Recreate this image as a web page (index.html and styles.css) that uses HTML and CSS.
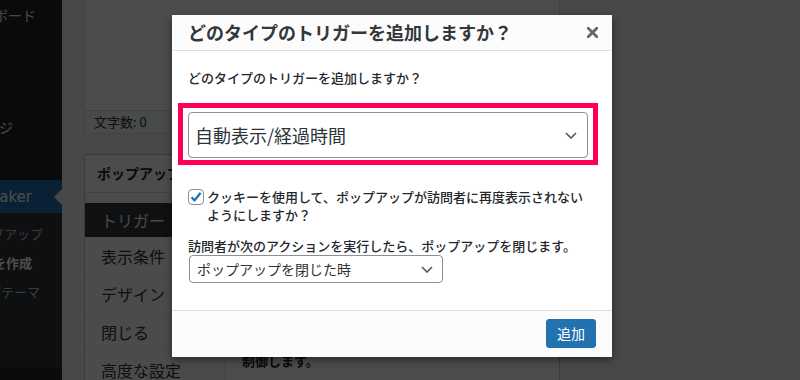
FILE: index.html
```html
<!DOCTYPE html>
<html lang="ja">
<head>
<meta charset="utf-8">
<title>トリガーを追加</title>
<link rel="stylesheet" href="styles.css">
</head>
<body>
<div class="admin">
  <nav class="sidebar">
    <div class="menu-item dash"><span>ダッシュボード</span></div>
    <div class="menu-spacer s80"></div>
    <div class="menu-item page"><span>固定ページ</span></div>
    <div class="menu-spacer s36"></div>
    <div class="menu-item current"><span>Popup Maker</span></div>
    <div class="submenu">
      <div class="sub-item all"><span>すべてのポップアップ</span></div>
      <div class="sub-item new"><span>ポップアップを作成</span></div>
      <div class="sub-item theme"><span>ポップアップテーマ</span></div>
    </div>
  </nav>
  <main class="content">
    <div class="editor">
      <div class="editor-area"></div>
      <div class="editor-status">文字数: 0</div>
    </div>
    <section class="postbox">
      <h2 class="postbox-title">ポップアップ設定</h2>
      <div class="postbox-body">
        <ul class="tabs">
          <li class="tab active">トリガー</li>
          <li class="tab">表示条件</li>
          <li class="tab">デザイン</li>
          <li class="tab">閉じる</li>
          <li class="tab">高度な設定</li>
        </ul>
        <div class="panel">
          <p class="panel-text">ポップアップの表示を<br>制御します。</p>
        </div>
      </div>
    </section>
  </main>
</div>

<div class="overlay"></div>

<div class="modal" role="dialog">
  <header class="modal-header">
    <h1 class="modal-title">どのタイプのトリガーを追加しますか？</h1>
    <span class="modal-close" aria-label="閉じる">
      <svg width="11" height="11" viewBox="0 0 11 11"><path d="M1.2 1.2 L9.8 9.8 M9.8 1.2 L1.2 9.8" stroke="#666" stroke-width="2.8" stroke-linecap="square"/></svg>
    </span>
  </header>
  <div class="modal-body">
    <div class="field-label first">どのタイプのトリガーを追加しますか？</div>
    <div class="highlight">
      <div class="select big">
        <span>自動表示/経過時間</span>
        <svg class="chev" width="12" height="7" viewBox="0 0 12 7"><path d="M1 1 L6 6 L11 1" fill="none" stroke="#50575e" stroke-width="1.6"/></svg>
      </div>
    </div>
    <div class="check-row">
      <span class="checkbox">
        <svg width="14" height="14" viewBox="0 0 14 14"><path d="M2.6 7.2 L5.6 10.4 L11.6 2.8" fill="none" stroke="#2271b1" stroke-width="2.3" stroke-linejoin="round"/></svg>
      </span>
      <span class="check-text">クッキーを使用して、ポップアップが訪問者に再度表示されないようにしますか？</span>
    </div>
    <div class="field-label">訪問者が次のアクションを実行したら、ポップアップを閉じます。</div>
    <div class="select small">
      <span>ポップアップを閉じた時</span>
      <svg class="chev" width="12" height="7" viewBox="0 0 12 7"><path d="M1 1 L6 6 L11 1" fill="none" stroke="#50575e" stroke-width="1.6"/></svg>
    </div>
  </div>
  <footer class="modal-footer">
    <button class="button-primary">追加</button>
  </footer>
</div>
</body>
</html>
```

FILE: styles.css
```css
* { box-sizing: border-box; }

html, body {
  margin: 0;
  padding: 0;
}

body {
  width: 800px;
  height: 380px;
  overflow: hidden;
  position: relative;
  background: #f0f0f1;
  font-family: "Noto Sans CJK JP", "Noto Sans", sans-serif;
  color: #1d2327;
}

.admin {
  display: flex;
  height: 380px;
  overflow: hidden;
}

/* ---------- sidebar ---------- */
.sidebar {
  width: 62px;
  flex: 0 0 62px;
  background: #1d2327;
  display: flex;
  flex-direction: column;
  overflow: hidden;
}

.menu-item,
.sub-item {
  display: flex;
  justify-content: flex-end;
  align-items: center;
  overflow: hidden;
  white-space: nowrap;
  color: #f0f0f1;
  font-size: 14px;
}

.menu-item span,
.sub-item span { flex-shrink: 0; }

.menu-item.dash { height: 30px; padding-right: 26px; }
.menu-item.page { height: 34px; padding-right: 49px; }
.menu-spacer.s80 { height: 80px; }
.menu-spacer.s36 { height: 36px; }

.menu-item.current {
  height: 33px;
  padding-right: 30px;
  background: #2271b1;
  color: #fff;
  font-family: "DejaVu Sans", sans-serif;
  font-size: 15px;
  position: relative;
}

.menu-item.current::after {
  content: "";
  position: absolute;
  right: 0;
  top: 9px;
  border-top: 8px solid transparent;
  border-bottom: 8px solid transparent;
  border-right: 8px solid #f0f0f1;
}

.submenu {
  background: #2c3338;
  height: 155px;
  padding-top: 6px;
}

.sub-item {
  height: 29px;
  font-size: 13px;
  color: rgba(240, 246, 252, 0.75);
}
.sub-item.all { padding-right: 19px; }
.sub-item.new { padding-right: 30px; color: #fff; font-weight: 700; }
.sub-item.theme { padding-right: 22px; }

/* ---------- content ---------- */
.content {
  flex: 1;
  padding-left: 22px;
}

.editor {
  width: 476px;
  border: 1px solid #dcdcde;
  border-top: 0;
  background: #fff;
}

.editor-area { height: 110px; }

.editor-status {
  height: 23px;
  border-top: 1px solid #dcdcde;
  background: #f6f7f7;
  font-size: 13px;
  line-height: 22px;
  padding-left: 9px;
  color: #2c3338;
}

.postbox {
  width: 476px;
  margin-top: 20px;
  border: 1px solid #c3c4c7;
  border-bottom: 0;
  background: #fff;
}

.postbox-title {
  margin: 0;
  height: 38px;
  border-bottom: 1px solid #dcdcde;
  font-size: 14px;
  font-weight: 700;
  line-height: 36px;
  padding-left: 12px;
}

.postbox-body {
  display: flex;
  height: 187px;
  overflow: hidden;
}

.tabs {
  list-style: none;
  margin: 0;
  padding: 10px 0 0;
  width: 141px;
  border-right: 1px solid #dcdcde;
  background: #fafafa;
}

.tab {
  height: 38px;
  border-bottom: 1px solid #eee;
  padding-left: 16px;
  font-size: 16px;
  line-height: 37px;
  color: #2c3338;
}

.tab.active {
  height: 35px;
  line-height: 34px;
  background: #32373c;
  color: #f0f0f1;
}

.panel {
  flex: 1;
  padding: 138px 16px 0;
}

.panel-text {
  margin: 0;
  font-size: 13px;
  font-weight: 700;
  line-height: 20px;
  color: #1d2327;
}

/* ---------- overlay & modal ---------- */
.overlay {
  position: absolute;
  inset: 0;
  background: rgba(0, 0, 0, 0.7);
}

.modal {
  position: absolute;
  left: 172px;
  top: 15px;
  width: 440px;
  background: #fff;
  box-shadow: 0 3px 8px rgba(0, 0, 0, 0.45);
}

.modal-header {
  height: 36px;
  background: #fcfcfc;
  border-bottom: 1px solid #dfdfdf;
  display: flex;
  align-items: center;
  justify-content: space-between;
  padding: 0 14px 0 16px;
}

.modal-title {
  margin: 0;
  font-size: 18px;
  font-weight: 700;
  line-height: 35px;
  color: #32373c;
}

.modal-close {
  display: flex;
  width: 11px;
  height: 11px;
}

.modal-body {
  height: 259px;
  padding: 18px 16px 0;
  color: #23282d;
}

.field-label {
  font-size: 13px;
  line-height: 18px;
  font-weight: 500;
}

.field-label.first { margin-bottom: 16px; }

.highlight {
  width: 420px;
  margin-left: -10px;
  border: 5px solid #ff0050;
  padding: 4px 0 2px 5px;
  margin-bottom: 23px;
}

.select {
  display: flex;
  align-items: center;
  justify-content: space-between;
  border: 1px solid #8c8f94;
  border-radius: 4px;
  background: #fff;
  color: #2c3338;
}

.select.big {
  width: 400px;
  height: 46px;
  font-size: 18px;
  padding: 0 10px 0 6px;
}

.select.small {
  width: 254px;
  height: 28px;
  font-size: 14px;
  padding: 0 9px 0 7px;
  margin-left: 1px;
}

.check-row {
  display: flex;
  align-items: flex-start;
  margin-bottom: 13px;
}

.checkbox {
  flex: 0 0 16px;
  width: 16px;
  height: 16px;
  margin-top: 1px;
  margin-right: 3px;
  border: 1px solid #8c8f94;
  border-radius: 4px;
  display: flex;
  align-items: center;
  justify-content: center;
  background: #fff;
}

.check-text {
  width: 380px;
  font-size: 13px;
  line-height: 18px;
  font-weight: 500;
}

.modal-footer {
  height: 47px;
  border-top: 1px solid #dfdfdf;
  background: #fcfcfc;
  display: flex;
  justify-content: flex-end;
  align-items: flex-start;
  padding: 8px 16px 0 0;
}

.button-primary {
  height: 29px;
  padding: 0 10px;
  border: 1px solid #2271b1;
  border-radius: 3px;
  background: #2271b1;
  color: #fff;
  font-family: inherit;
  font-size: 14px;
  line-height: 27px;
}
```
